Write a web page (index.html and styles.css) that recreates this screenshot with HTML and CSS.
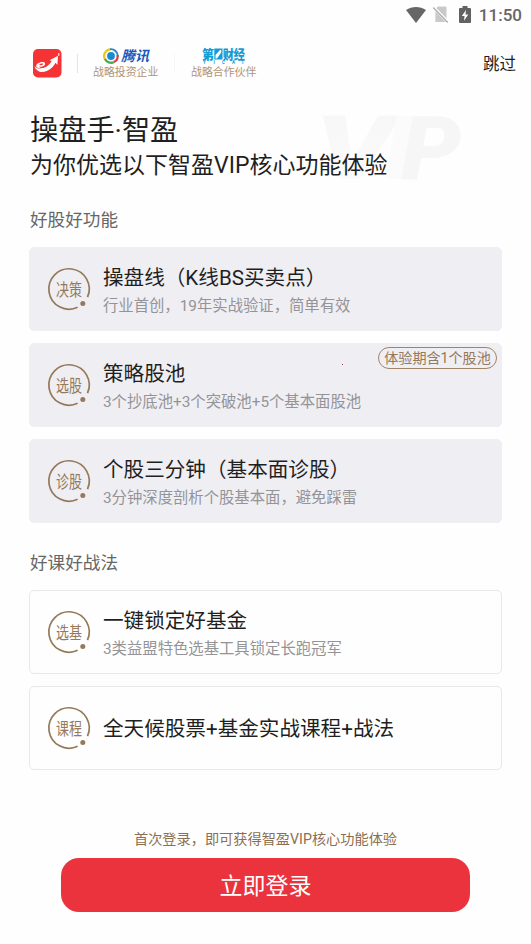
FILE: index.html
```html
<!DOCTYPE html>
<html lang="zh-CN">
<head>
<meta charset="utf-8">
<title>操盘手·智盈</title>
<link rel="stylesheet" href="styles.css">
</head>
<body>
<div class="status">
  <svg class="wifi" width="20" height="16" viewBox="0 0 20 16"><path d="M0 3.1C6-1 14-1 20 3.1L10 16Z" fill="#666"/></svg>
  <svg class="sim" width="16" height="17" viewBox="0 0 16 17"><path d="M5 .5h7.2q1.3 0 1.3 1.3V16H2.4V3Z" fill="#c9c9c9"/><path d="M.5 1.2 15.2 16.2" stroke="#fff" stroke-width="3"/><path d="M.2 1.5 14.8 16.5" stroke="#aaa" stroke-width="1.2"/></svg>
  <svg class="battery" width="12" height="17" viewBox="0 0 12 17"><path d="M1 2h2.5V0h5v2H11q1 0 1 1v13q0 1-1 1H1q-1 0-1-1V3q0-1 1-1Z" fill="#626262"/><path d="M7 4 2.8 10H5.5L5 14.7 9.3 8.6H6.5Z" fill="#fff"/></svg>
  <span>11:50</span>
</div>
<header class="header">
  <svg class="logo" width="29" height="29" viewBox="0 0 29 29"><rect width="28.5" height="28.5" rx="5" fill="#f63334"/><path d="M9 19.2C3 19.8 1.6 16.3 5.1 14.3 9.8 11.6 13.8 13.5 11.5 16.2 10.3 17.6 7.8 18 5.8 17.4 8.2 20.6 14.8 18.8 18.7 11.9L16.6 11.2 25 6.8 24.4 16 22.6 13.8C18 22 9.5 25.5 4.2 21.2 2.7 20 1.8 18.8 1.7 17.2 3.5 19.3 6 20 9 19.2Z" fill="#fff"/><path d="M8.2 16.2C9.9 15.8 11.1 14.9 9.7 14.6 8.2 14.4 6.5 15.1 5.9 16.1Z" fill="#f63334"/><path d="M25.8 4v3" stroke="#fff"/></svg>
  <div class="partner">
    <div class="brand tencent">
      <svg width="16" height="16" viewBox="0 0 16 16"><circle cx="8" cy="8" r="3.9" fill="#188bd0"/><path d="M2.2 11.8A6.8 6.8 0 0 1 8 1.3" fill="none" stroke="#e9c91f" stroke-width="2.3"/><path d="M7 1.2A6.8 6.8 0 0 1 14.7 8.5" fill="none" stroke="#2387d2" stroke-width="1.8"/><path d="M14.6 7A6.8 6.8 0 0 1 11 14.1" fill="none" stroke="#dc3f43" stroke-width="2.3"/><path d="M2 11A6.8 6.8 0 0 0 11 14.1" fill="none" stroke="#42ae55" stroke-width="2.3"/></svg>
      <b>腾讯</b>
    </div>
    <p>战略投资企业</p>
  </div>
  <div class="partner second">
    <div class="brand yicai">
      <svg width="44" height="16" viewBox="0 0 44 16"><text class="yicai-name" x="0" y="11.3" textLength="12" lengthAdjust="spacingAndGlyphs">第</text><path d="M12.3 .5H20.5V11.5H12.3Z" fill="#139bd5"/><path d="M13.5 10.5V7L18 2h1.2v2.5L15 10.5Z" fill="#fff"/><text class="yicai-name" x="20.7" y="11.3" textLength="22.3" lengthAdjust="spacingAndGlyphs">财经</text><text class="yicai-sub" y="15.6"><tspan x="1">Y</tspan><tspan x="11.5">I</tspan><tspan x="20">C</tspan><tspan x="30">A</tspan><tspan x="40">I</tspan></text></svg>
    </div>
    <p>战略合作伙伴</p>
  </div>
  <span class="skip">跳过</span>
</header>
<main>
  <div class="hero">
    <svg class="vip" width="142" height="66" viewBox="0 0 142 66"><defs><linearGradient id="fade" x1="0" y1="0" x2="0" y2="1"><stop stop-color="#f6f6f6"/><stop offset="1" stop-color="#fcfcfc"/></linearGradient></defs><text x="-7" y="64" textLength="78" lengthAdjust="spacingAndGlyphs" fill="url(#fade)">V</text><text x="62" y="64" textLength="28" lengthAdjust="spacingAndGlyphs" fill="#fbfbfb">I</text><text x="79" y="64" textLength="60" lengthAdjust="spacingAndGlyphs" fill="#f6f6f6">P</text></svg>
    <h1>操盘手·智盈</h1>
    <h2>为你优选以下智盈VIP核心功能体验</h2>
  </div>
  <h3>好股好功能</h3>
  <section class="cards">
    <article class="card filled">
      <svg class="badge" viewBox="0 0 44 44"><path d="M40.5 30.2A20.2 20.2 0 1 0 30.6 40.3"/><circle cx="35.8" cy="36.5" r="2.5"/><text x="9" y="28.5" textLength="26" lengthAdjust="spacingAndGlyphs">决策</text></svg>
      <div><h4>操盘线（K线BS买卖点）</h4><p>行业首创，19年实战验证，简单有效</p></div>
    </article>
    <article class="card filled">
      <svg class="badge" viewBox="0 0 44 44"><path d="M40.5 30.2A20.2 20.2 0 1 0 30.6 40.3"/><circle cx="35.8" cy="36.5" r="2.5"/><text x="9" y="28.5" textLength="26" lengthAdjust="spacingAndGlyphs">选股</text></svg>
      <div><h4>策略股池</h4><p>3个抄底池+3个突破池+5个基本面股池</p></div>
      <span class="tag">体验期含1个股池</span>
      <i class="speck"></i>
    </article>
    <article class="card filled">
      <svg class="badge" viewBox="0 0 44 44"><path d="M40.5 30.2A20.2 20.2 0 1 0 30.6 40.3"/><circle cx="35.8" cy="36.5" r="2.5"/><text x="9" y="28.5" textLength="26" lengthAdjust="spacingAndGlyphs">诊股</text></svg>
      <div><h4>个股三分钟（基本面诊股）</h4><p>3分钟深度剖析个股基本面，避免踩雷</p></div>
    </article>
  </section>
  <h3 class="next">好课好战法</h3>
  <section class="cards">
    <article class="card">
      <svg class="badge" viewBox="0 0 44 44"><path d="M40.5 30.2A20.2 20.2 0 1 0 30.6 40.3"/><circle cx="35.8" cy="36.5" r="2.5"/><text x="9" y="28.5" textLength="26" lengthAdjust="spacingAndGlyphs">选基</text></svg>
      <div><h4>一键锁定好基金</h4><p>3类益盟特色选基工具锁定长跑冠军</p></div>
    </article>
    <article class="card">
      <svg class="badge" viewBox="0 0 44 44"><path d="M40.5 30.2A20.2 20.2 0 1 0 30.6 40.3"/><circle cx="35.8" cy="36.5" r="2.5"/><text x="9" y="28.5" textLength="26" lengthAdjust="spacingAndGlyphs">课程</text></svg>
      <div><h4 class="single">全天候股票+基金实战课程+战法</h4></div>
    </article>
  </section>
</main>
<footer>
  <p>首次登录，即可获得智盈VIP核心功能体验</p>
  <button>立即登录</button>
</footer>
</body>
</html>
```
FILE: styles.css
```css
* { box-sizing: border-box; }
body {
  margin: 0;
  height: 944px;
  overflow: hidden;
  background: #fefefe;
  color: #1f1f1f;
  font-family: Roboto, "Noto Sans CJK SC", sans-serif;
}
h1, h2, h3, h4, p { margin: 0; font-weight: 400; white-space: nowrap; }
svg { display: block; flex: none; overflow: visible; }

.status {
  height: 29px;
  padding-right: 9px;
  display: flex;
  align-items: center;
  justify-content: flex-end;
  color: #666;
  font-size: 17px;
  font-weight: 500;
}
.sim { margin-left: 7px; }
.battery { margin: 0 8px 0 10px; }

.header {
  height: 67px;
  padding: 0 15px 0 33px;
  display: flex;
  align-items: center;
}
.logo { margin-top: 1px; }
.partner {
  margin-left: 15px;
  padding-left: 16px;
  height: 31px;
  width: 83px;
  background: linear-gradient(#e4e4e4, #e4e4e4) 0 7px / 1px 19px no-repeat;
}
.partner.second { background-image: linear-gradient(#f7f7f7, #f7f7f7); margin-left: 14px; padding-left: 17px; width: 90px; }
.partner p { color: #b29474; font-size: 10.9px; line-height: 18px; }
.brand { height: 17px; display: flex; align-items: center; gap: 2px; }
.tencent { padding-left: 10px; }
.tencent b { color: #1958bc; font-size: 14px; font-weight: 700; font-style: italic; line-height: 16px; white-space: nowrap; }
.yicai { padding: 1px 0 0 11px; }
.yicai-name { fill: #139bd5; font-size: 13px; font-weight: 900; }
.yicai-sub { fill: #139bd5; font-size: 4.5px; font-weight: 700; }
.skip { margin-left: auto; font-size: 16.5px; }

main { padding: 0 29px; }
.hero { position: relative; height: 104px; padding: 16px 0 0 1px; }
.hero h1 { font-size: 28.2px; line-height: 38px; }
.hero h2 { font-size: 23px; line-height: 32px; }
.hero h1, .hero h2 { position: relative; }
.vip { position: absolute; left: 293px; top: 19px; }
.vip text { font: italic 900 89px Roboto, sans-serif; }
h3 { height: 47px; padding-left: 1px; color: #666; font-size: 17.6px; line-height: 41px; }
.next { margin-top: 20px; }

.cards { display: flex; flex-direction: column; gap: 12px; }
.card {
  position: relative;
  height: 84px;
  width: 473px;
  padding: 2px 18px 0;
  display: flex;
  align-items: center;
  gap: 12px;
  border: 1px solid #e8e8e8;
  border-radius: 5px;
}
.filled { background: #efeef3; border-color: #efeef3; }
.card h4 { font-size: 20.6px; line-height: 30px; }
.card h4.single { line-height: 31px; padding-top: 1px; }
.card p { padding-top: 1px; margin-bottom: -1px; color: #949498; font-size: 15.35px; line-height: 25px; }
.badge { width: 44px; height: 44px; margin: -2px 0 0 -1px; }
.badge path { fill: none; stroke: #96795a; stroke-width: 1.7; }
.badge circle { fill: #96795a; }
.badge text { fill: #96795a; font-size: 17px; font-weight: 400; }
.tag {
  position: absolute;
  top: 3px;
  right: 4px;
  width: 119px;
  height: 22px;
  border: 1px solid #a18467;
  border-radius: 11px;
  color: #96795a;
  font-size: 14.1px;
  line-height: 21px;
  text-align: center;
  white-space: nowrap;
}
.speck { position: absolute; left: 312px; top: 20px; width: 1px; height: 1px; background: #a04050; }

footer { margin-top: 57px; padding: 0 61px; text-align: center; }
footer p { color: #8c6f50; font-size: 14.2px; line-height: 24px; }
footer button {
  display: block;
  width: 409px;
  height: 54px;
  margin-top: 7px;
  padding: 0 0 2px;
  border: 0;
  border-radius: 18px;
  background: #eb333d;
  color: #fff;
  font: 400 23px Roboto, "Noto Sans CJK SC", sans-serif;
}
```
